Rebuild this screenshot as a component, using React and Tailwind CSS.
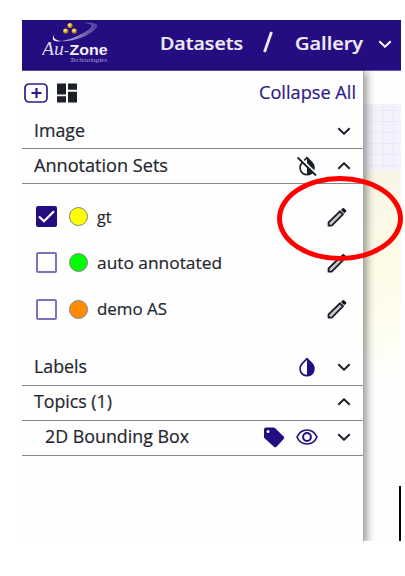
import React from "react";

const FONT = "font-['Open_Sans','Noto_Sans',sans-serif]";

function Chevron({ up, className = "text-[#1b1f27]" }) {
  return (
    <svg viewBox="0 0 14 8" className={`h-2 w-[14px] shrink-0 ${className}`} fill="none" stroke="currentColor" strokeWidth="2">
      <path d={up ? "M1.3 6.7 7 1.3l5.7 5.4" : "M1.3 1.3 7 6.7l5.7-5.4"} />
    </svg>
  );
}

function Pencil() {
  return (
    <svg viewBox="0 0 20 20" className="h-5 w-5 shrink-0">
      <path d="M1.600 18.600v-3.200L13 4.400l2.900 2.900L4.800 18.600Z" fill="#c9cacb" stroke="#1b1f27" strokeWidth="1.900" />
      <path d="m14 2.700 1.700-1.500q.6-.5 1.200 0l2.200 2.100q.5.600 0 1.200l-1.900 1.800Z" fill="#0c0f15" />
    </svg>
  );
}

function Drop({ off }) {
  return (
    <svg viewBox="0 0 20 20" className={`h-5 w-5 shrink-0 ${off ? "text-[#1b1f27]" : "text-[#240d80]"}`}>
      <path d="m10 1.600-4.600 4.800C.7 11.500 3.600 18.600 10 18.600s9.300-7.100 4.600-12.200Z" fill="none" stroke="currentColor" strokeWidth="1.600" />
      <path d="m10 1.500 4.800 5c4.500 4.900 1.300 12.100-4.800 12.100Z" fill="currentColor" />
      {off && (
        <>
          <path d="M2 .5 20 18.500" stroke="#fff" strokeWidth="2" />
          <path d="M.5 1.500 19 19.500" stroke="currentColor" strokeWidth="1.900" />
        </>
      )}
    </svg>
  );
}

function Tag() {
  return (
    <svg viewBox="0 0 22 21" className="h-[21px] w-[22px] shrink-0">
      <path fillRule="evenodd" fill="#240d80" d="M3 .5h7.500q1 0 1.700.7l8.500 8.300q1.300 1.300 0 2.600l-7.200 7.600q-1.200 1.200-2.500 0L1.800 11.500q-.8-.8-.8-1.800V2.500q0-2 2-2ZM5 3a1.500 1.500 0 1 0 0 3 1.500 1.500 0 0 0 0-3Z" />
    </svg>
  );
}

function Eye() {
  return (
    <svg viewBox="0 0 22 16" className="h-4 w-[22px] shrink-0" fill="none" stroke="#240d80" strokeWidth="1.700">
      <path d="M1 8Q4.200 1 11 1t10 7q-3.200 7-10 7T1 8Z" />
      <circle cx="11" cy="8" r="3.900" strokeWidth="2" />
    </svg>
  );
}

function Logo() {
  return (
    <svg viewBox="0 0 72 50" className="h-[50px] w-[72px] shrink-0">
      <defs>
        <linearGradient id="swoosh" x1="0" x2="1">
          <stop offset="0" stopColor="#fff" />
          <stop offset=".35" stopColor="#a79ccd" />
          <stop offset="1" stopColor="#4d3c98" />
        </linearGradient>
        <radialGradient id="gold" cx=".4" cy=".35">
          <stop offset="0" stopColor="#fff3ac" />
          <stop offset=".6" stopColor="#f3bd35" />
          <stop offset="1" stopColor="#b57a22" />
        </radialGradient>
      </defs>
      <path d="M12.500 14C6 24 20 22.500 32 17.500 47 11 57 4 42 3 57 2 59 6 50 12 39 20 22 23 15 20Q10 18 12.500 14Z" fill="url(#swoosh)" />
      <circle cx="28" cy="5.500" r="2.600" fill="url(#gold)" />
      <circle cx="23.700" cy="11" r="2.600" fill="url(#gold)" />
      <circle cx="32.300" cy="11" r="2.600" fill="url(#gold)" />
      <text x="0" y="34.500" textLength="22" lengthAdjust="spacingAndGlyphs" fill="#d9d3ef" fontSize="18" fontWeight="400" fontStyle="italic" fontFamily="Liberation Serif, serif">Au</text>
      <text x="22" y="34.500" fill="#d9d3ef" fontSize="15" fontWeight="400" fontFamily="Liberation Serif, serif">-</text>
      <text x="27.500" y="34.500" textLength="38" lengthAdjust="spacingAndGlyphs" fill="#f4f2fb" fontSize="15" fontWeight="700" fontFamily="Liberation Sans, sans-serif">Zone</text>
      <text x="28" y="42" textLength="37" lengthAdjust="spacingAndGlyphs" fill="#aaa0d3" fontSize="6" fontWeight="400" fontStyle="italic" fontFamily="Liberation Serif, serif">Technologies</text>
    </svg>
  );
}

function Label({ width, children }) {
  return (
    <svg height="24" width={width} className="shrink-0 overflow-visible">
      <text x="0" y="18" textLength={width} lengthAdjust="spacingAndGlyphs" fill="currentColor" stroke="currentColor" strokeWidth="0.2">{children}</text>
    </svg>
  );
}

function Section({ label, width, up, indent, raised, children }) {
  return (
    <div className={`flex h-[35px] items-center justify-between border-b border-[#898989] pr-[12px] ${indent ? "pl-[23px]" : "pl-3"} ${raised ? "pb-[2px]" : ""}`}>
      <Label width={width}>{label}</Label>
      <div className="flex items-center">
        {children}
        <Chevron up={up} />
      </div>
    </div>
  );
}

function AnnotationSet({ name, width, color, checked }) {
  return (
    <div className="flex h-[46.300px] items-center pl-[14px] pr-4">
      <div className={`flex h-[21px] w-[21px] items-center justify-center rounded-[2px] border-2 ${checked ? "border-[#240d80] bg-[#240d80]" : "border-[#8270bd] bg-white"}`}>
        {checked && (
          <svg viewBox="0 0 17 13" className="h-[13px] w-[17px] shrink-0" fill="none" stroke="#fff" strokeWidth="2.200">
            <path d="m1 6.500 5 4.700L16 1.300" />
          </svg>
        )}
      </div>
      <div className={`ml-3 h-[19px] w-[19px] rounded-full border border-[#858585] ${color}`} />
      <div className="ml-[9px] flex text-[17px]"><Label width={width}>{name}</Label></div>
      <div className="ml-auto"><Pencil /></div>
    </div>
  );
}

export default function App() {
  return (
    <div className={`relative h-[576px] w-[405px] overflow-hidden bg-white pl-[22px] pt-5 text-[17.500px] font-medium text-[#24272e] ${FONT}`}>
      <div className="flex h-[521px] w-[379px] flex-col overflow-hidden">
        <header className="flex h-[51px] shrink-0 items-center border-b border-[#6f52b3] bg-[#240d80] pl-5 font-semibold text-[#eeebf7]">
          <Logo />
          <div className="mb-[2px] ml-[46px] flex text-[18.500px]"><Label width={83}>Datasets</Label></div>
          <svg viewBox="0 0 12 22" className="mb-[6px] ml-[19px] mr-[21px] h-[22px] w-3 shrink-0"><path d="M9.500 1 2.500 21" stroke="#eeebf7" strokeWidth="2.800" /></svg>
          <div className="mb-[2px] flex text-[18.500px]"><Label width={68}>Gallery</Label></div>
          <Chevron className="mb-[2px] ml-[15px] text-white" />
        </header>

        <div className="flex min-h-0 flex-1">
          <aside className="z-10 h-full w-[342px] shrink-0 border-r border-[#aaa] bg-[#fefefe] shadow-[2px_2px_8px_1px_rgba(0,0,0,0.4)]">
            <div className="flex h-[43px] items-center pl-[2px] pr-[7px] text-[#301a88]">
              <svg viewBox="0 0 24 20" className="h-5 w-6 shrink-0" fill="none" stroke="currentColor">
                <rect x="1" y="1" width="22" height="18" rx="4" strokeWidth="1.700" />
                <path d="M12.500 5v10M7.500 10h10" strokeWidth="2.200" />
              </svg>
              <svg viewBox="0 0 20 20" className="ml-[9px] h-5 w-5 shrink-0" fill="#1b1f27">
                <path d="M0 .5h9v11H0zM11 .5h9v6.200h-9zM0 13.300h9v6.200H0zM11 8.700h9v10.800h-9z" />
              </svg>
              <div className="ml-auto flex"><Label width={97}>Collapse All</Label></div>
            </div>
            <Section label="Image" width={51} />
            <Section label="Annotation Sets" width={134} up>
              <div className="mr-5 flex"><Drop off /></div>
            </Section>
            <div className="flex h-[167px] flex-col pt-[9.500px]">
              <AnnotationSet name="gt" width={14.5} color="bg-[#ffff00]" checked />
              <AnnotationSet name="auto annotated" width={125} color="bg-[#00ff00]" />
              <AnnotationSet name="demo AS" width={70} color="bg-[#ff8c00]" />
            </div>
            <Section label="Labels" width={53} raised>
              <div className="mr-5 flex"><Drop /></div>
            </Section>
            <Section label="Topics (1)" width={78} up raised />
            <Section label="2D Bounding Box" width={144} indent raised>
              <div className="mr-[11px] flex"><Tag /></div>
              <div className="mr-[19px] flex"><Eye /></div>
            </Section>
          </aside>

          <main className="flex h-full flex-1 flex-col bg-[#fefefe]">
            <div className="h-[33px] shrink-0" />
            <div className="h-[66px] shrink-0 bg-[#f4f3fd] bg-[linear-gradient(#eae8f6_1px,transparent_1px),linear-gradient(90deg,#eae8f6_1px,transparent_1px)] bg-[size:11px_11px] bg-[position:7px_6px]" />
            <div className="h-[210px] shrink-0 bg-[linear-gradient(#f8f5e6,#fdfce7_45%,#fefef0_75%,#fefefe)]" />
            <div className="flex flex-1 items-end justify-end">
              <div className="h-[55px] w-[2px] bg-black" />
            </div>
          </main>
        </div>
      </div>

      <div className="absolute left-[277px] top-[176px] z-20 h-[85px] w-[126px] rounded-[50%] border-[5px] border-[#ff0000]" />
    </div>
  );
}
